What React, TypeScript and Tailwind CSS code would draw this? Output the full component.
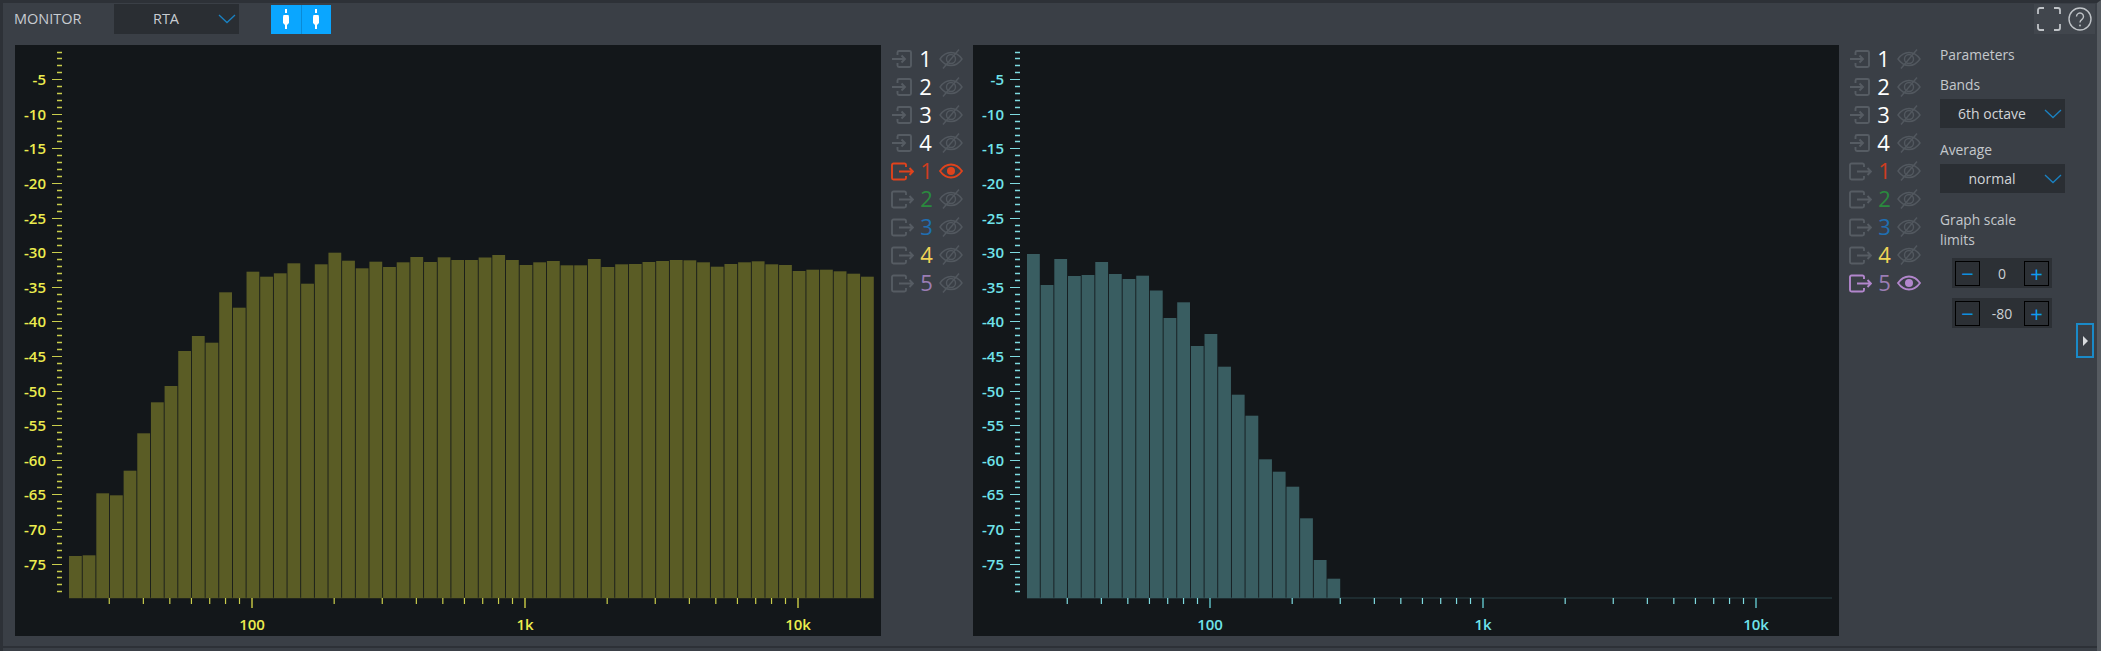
import * as React from 'react'

const leftBars = [
  556, 555.3, 493.3, 495.3, 470.7, 433.3, 402.3, 386, 351, 336, 342.7, 292.3, 307.7, 271.7, 276.7, 273.3, 263.3, 283.7, 264.3, 252.7,
  260.7, 268.3, 261.7, 267, 262.3, 257, 262, 257.3, 260, 260, 257.5, 255, 260, 265, 262.3, 261, 265.3, 265.3, 259, 267,
  264.3, 264, 262, 261, 260, 260.3, 262.3, 266.7, 264, 262.3, 261.3, 264.3, 265, 271, 269.7, 269.7, 271.3, 273.7, 276.7,
]

const rightBars = [
  254, 285, 259, 276, 275, 262, 274, 279, 275.7, 290.5, 318, 302.3, 346, 334, 366.7, 394.7, 415.7, 459.3, 471.7, 486.7, 518.3, 560, 578.7,
]

const dbTicks = Array.from({ length: 79 }, (_, i) => i + 1)
const hz = [30, 40, 50, 60, 70, 80, 90, 200, 300, 400, 500, 600, 700, 800, 900, 2000, 3000, 4000, 5000, 6000, 7000, 8000, 9000]
const hzX = (f: number) => 237 + 273 * Math.log10(f / 100)

function Graph({
  bars,
  barColor,
  tickColor,
  labelColor,
  lineColor,
}: {
  bars: number[]
  barColor: string
  tickColor: string
  labelColor: string
  lineColor: string
}) {
  return (
    <svg width="866" height="591" className="block shrink-0 bg-[#13171a]">
      <line x1="54" y1="553" x2="859" y2="553" stroke={lineColor} />
      {bars.map((top, i) => (
        <rect key={i} x={54 + i * 13.655} y={top - 45} width={12.8} height={598 - top} fill={barColor} />
      ))}
      {dbTicks.map((db) => {
        const y = Math.round(6.92 * db - 0.4) + 0.5
        const major = db % 5 === 0
        return (
          <g key={db}>
            <line x1={major ? 37 : 42} x2="47" y1={y} y2={y} stroke={tickColor} strokeWidth={major ? 1 : 1.5} />
            {major && db < 80 && (
              <text x="31" y={y + 5.5} textAnchor="end" fontSize="15" fontWeight="600" fill={labelColor}>
                -{db}
              </text>
            )}
          </g>
        )
      })}
      {hz.map((f) => (
        <line key={f} x1={hzX(f)} x2={hzX(f)} y1="553" y2="559" stroke={tickColor} strokeWidth="1.2" />
      ))}
      {[
        [100, '100'],
        [1000, '1k'],
        [10000, '10k'],
      ].map(([f, label]) => (
        <g key={label}>
          <line x1={hzX(+f)} x2={hzX(+f)} y1="553" y2="563" stroke={labelColor} strokeWidth="1.2" />
          <text x={hzX(+f)} y="585" textAnchor="middle" fontSize="15" fontWeight="600" fill={labelColor}>
            {label}
          </text>
        </g>
      ))}
    </svg>
  )
}

function InputIcon() {
  return (
    <svg width="20" height="18" viewBox="0 0 20 18" fill="none" stroke="#565c63" strokeWidth="1.9" className="shrink-0">
      <path d="M5.500 5V2.500a1.500 1.500 0 0 1 1.500-1.500h10.500a1.500 1.500 0 0 1 1.500 1.500v13a1.500 1.500 0 0 1-1.500 1.500H7a1.500 1.500 0 0 1-1.500-1.500V13" />
      <path d="M0 9h12.500M9.500 5.500 13 9l-3.500 3.500" />
    </svg>
  )
}

function OutputIcon({ color }: { color: string }) {
  return (
    <svg width="23" height="19" viewBox="0 0 23 19" fill="none" stroke={color} strokeWidth="1.9" className="shrink-0">
      <path d="M15 5V3a1.500 1.500 0 0 0-1.500-1.500h-11A1.500 1.500 0 0 0 1 3v13a1.500 1.500 0 0 0 1.500 1.500h11A1.500 1.500 0 0 0 15 16v-2" />
      <path d="M8 9.500h14M18.500 6l3.500 3.500-3.500 3.500" />
    </svg>
  )
}

function Eye({ color }: { color?: string }) {
  const stroke = color ?? '#52585f'
  return (
    <svg width="24" height="22" viewBox="0 0 24 22" fill="none" stroke={stroke} strokeWidth={color ? 1.800 : 1.400} className="shrink-0">
      <path d="M1 11c3-4.300 6.700-6.500 11-6.500S20 6.700 23 11c-3 4.300-6.700 6.500-11 6.500S4 15.300 1 11Z" />
      {color ? (
        <circle cx="12" cy="11" r="4" fill={color} stroke="none" />
      ) : (
        <>
          <circle cx="12" cy="11" r="4.500" />
          <path d="M4 20.500 20 1.500" />
        </>
      )}
    </svg>
  )
}

const outputColors = ['#cf3d1f', '#2a8a3e', '#1f6fb2', '#f0d456', '#9a7db4']

function RouteList({ activeOut, activeColor }: { activeOut: number; activeColor: string }) {
  return (
    <div className="w-[92px] shrink-0 flex flex-col pl-[11px]">
      {[1, 2, 3, 4].map((n) => (
        <div key={n} className="h-[28px] flex items-center">
          <InputIcon />
          <span className="w-[27px] -mt-[2px] text-center text-[22px] text-white">{n}</span>
          <Eye />
        </div>
      ))}
      {[1, 2, 3, 4, 5].map((n) => {
        const active = n === activeOut
        return (
          <div key={n} className="h-[28px] flex items-center -ml-[1px]">
            <OutputIcon color={active ? activeColor : '#565c63'} />
            <span className="w-[25px] -mt-[2px] text-center text-[22px]" style={{ color: outputColors[n - 1] }}>
              {n}
            </span>
            <Eye color={active ? activeColor : undefined} />
          </div>
        )
      })}
    </div>
  )
}

function Chevron() {
  return (
    <svg width="18" height="10" viewBox="0 0 18 10" fill="none" stroke="#1a82c2" strokeWidth="1.300" className="shrink-0">
      <path d="M1 1l8 7.500L17 1" />
    </svg>
  )
}

function Select({ value }: { value: string }) {
  return (
    <div className="w-[125px] h-[29px] bg-[#2a2e33] flex items-center text-[14px] text-[#d2d5d8]">
      <span className="flex-1 text-center">{value}</span>
      <span className="pr-[3px]">
        <Chevron />
      </span>
    </div>
  )
}

function Stepper({ value }: { value: string }) {
  return (
    <div className="w-[100px] h-[30px] bg-[#2c3035] flex items-center justify-between px-[3px] text-[#cdd0d4] text-[14px]">
      <button className="w-[25px] h-[25px] border border-black flex items-center justify-center text-[22px] leading-none text-[#0f8fdc]">
        −
      </button>
      <span>{value}</span>
      <button className="w-[25px] h-[25px] border border-black flex items-center justify-center text-[22px] leading-none text-[#0f9cf0]">
        +
      </button>
    </div>
  )
}

function Jack() {
  return (
    <svg width="8" height="20" viewBox="0 0 8 20" fill="#fff">
      <rect x="3" y="0" width="2" height="4" />
      <path d="M1.500 6h5l.5 2v6l-2 2v4H3v-4l-2-2V8Z" />
    </svg>
  )
}

export default function App() {
  return (
    <div className="w-[2101px] h-[651px] overflow-hidden bg-[#3a3f46] border-t-[3px] border-l-[3px] border-r-[4px] border-t-[#2d3137] border-l-[#2d3137] border-r-[#565b61] font-['Open_Sans',sans-serif]">
      <div className="flex items-center h-[30px] mt-[1px] pl-[11px] pr-[2px]">
        <span className="w-[100px] text-[14.500px] text-[#c8ccd1]">MONITOR</span>
        <div className="w-[125px] h-[30px] bg-[#2a2e33] flex items-center text-[14.500px] text-[#c8ccd1]">
          <span className="flex-1 text-center">RTA</span>
          <span className="pr-[3px]">
            <Chevron />
          </span>
        </div>
        <div className="ml-[32px] w-[60px] h-[29px] bg-[#0aa6ff] flex items-center">
          <div className="flex-1 h-full flex items-center justify-center border-r border-[#0a8ad6]">
            <Jack />
          </div>
          <div className="flex-1 h-full flex items-center justify-center">
            <Jack />
          </div>
        </div>
        <div className="ml-auto w-[61px] h-[30px] bg-[#41464d] flex items-center justify-end gap-[7px] pr-[3px]">
          <svg width="24" height="24" viewBox="0 0 24 24" fill="none" stroke="#bfc3c7" strokeWidth="1.800">
            <path d="M1 7V3a2 2 0 0 1 2-2h4M17 1h4a2 2 0 0 1 2 2v4M23 17v4a2 2 0 0 1-2 2h-4M7 23H3a2 2 0 0 1-2-2v-4" />
          </svg>
          <svg width="24" height="24" viewBox="0 0 24 24" fill="none" stroke="#bfc3c7" strokeWidth="1.400">
            <circle cx="12" cy="12" r="11" />
            <path d="M8.500 9.500a3.500 3.500 0 1 1 5.500 2.900c-1.300.9-2 1.600-2 3.100" />
            <circle cx="12" cy="18.500" r="0.900" fill="#bfc3c7" stroke="none" />
          </svg>
        </div>
      </div>
      <div className="flex mt-[11px] pl-[12px]">
        <Graph bars={leftBars} barColor="#5a5c25" tickColor="#c9cd4c" labelColor="#ecec4e" lineColor="#33351f" />
        <RouteList activeOut={1} activeColor="#e0431c" />
        <Graph bars={rightBars} barColor="#395d61" tickColor="#7fdbe0" labelColor="#6fe3ea" lineColor="#2a4346" />
        <RouteList activeOut={5} activeColor="#b286cc" />
        <div className="w-[125px] shrink-0 ml-[9px] flex flex-col text-[13.800px] text-[#c4c8cc]">
          <div className="h-[20px] leading-[20px]">Parameters</div>
          <div className="h-[20px] leading-[20px] mt-[10px] mb-[4px]">Bands</div>
          <Select value="6th octave" />
          <div className="h-[20px] leading-[20px] mt-[12px] mb-[4px]">Average</div>
          <Select value="normal" />
          <div className="leading-[20px] mt-[17px] mb-[8px]">
            Graph scale
            <br />
            limits
          </div>
          <div className="ml-[12px] flex flex-col gap-[10px]">
            <Stepper value="0" />
            <Stepper value="-80" />
          </div>
        </div>
        <div className="ml-[11px] mt-[278px] w-[18px] h-[35px] border-2 border-[#1a8ac8] flex items-center justify-center">
          <span className="w-0 h-0 border-y-[5px] border-y-transparent border-l-[5px] border-l-[#d8dbde]" />
        </div>
      </div>
      <div className="mt-[10px] border-t-[2px] border-t-[#2d3137]" />
    </div>
  )
}
